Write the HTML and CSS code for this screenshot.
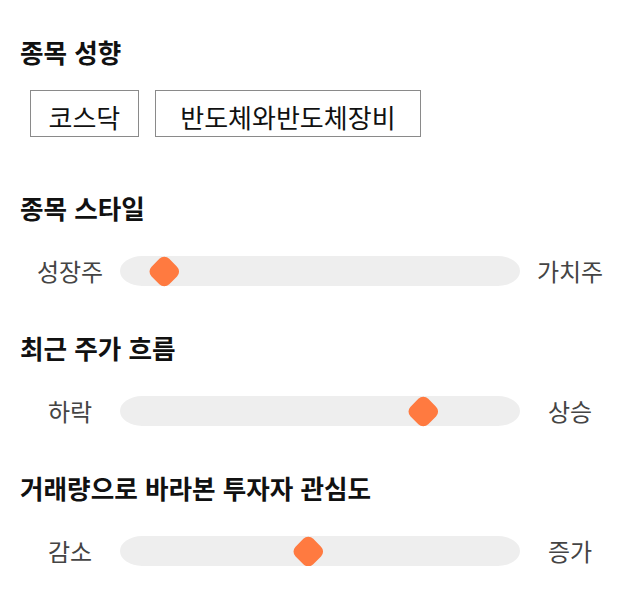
FILE: index.html
```html
<!DOCTYPE html>
<html lang="ko">
<head>
<meta charset="utf-8">
<link rel="stylesheet" href="styles.css">
</head>
<body>
<main class="page">
  <h2 class="title first">종목 성향</h2>
  <div class="chips">
    <span class="chip">코스닥</span>
    <span class="chip chip-wide">반도체와반도체장비</span>
  </div>

  <h2 class="title">종목 스타일</h2>
  <div class="scale">
    <span class="label">성장주</span>
    <div class="track">
      <span class="thumb" style="left: 30px"></span>
    </div>
    <span class="label">가치주</span>
  </div>

  <h2 class="title">최근 주가 흐름</h2>
  <div class="scale">
    <span class="label">하락</span>
    <div class="track">
      <span class="thumb" style="left: 289px"></span>
    </div>
    <span class="label">상승</span>
  </div>

  <h2 class="title">거래량으로 바라본 투자자 관심도</h2>
  <div class="scale">
    <span class="label">감소</span>
    <div class="track">
      <span class="thumb" style="left: 174px"></span>
    </div>
    <span class="label">증가</span>
  </div>
</main>
</body>
</html>
```

FILE: styles.css
```css
* { box-sizing: border-box; }
html, body { margin: 0; padding: 0; background: #ffffff; }
body {
  font-family: "Noto Sans CJK KR", "Noto Sans", sans-serif;
  color: #111111;
}
.page {
  width: 640px;
  padding: 0 20px;
  display: flex;
  flex-direction: column;
}
.title {
  margin: 46px 0 0 0;
  font-size: 25.6px;
  line-height: 32px;
  font-weight: 700;
  color: #111111;
}
.title.first { margin-top: 36px; }
.chips {
  display: flex;
  gap: 16px;
  margin: 22px 0 0 10px;
}
.chip {
  height: 47px;
  border: 1px solid #8a8a8a;
  padding: 11px 17.5px 4px;
  font-size: 26px;
  line-height: 30px;
  color: #111111;
}
.chip-wide {
  padding-left: 24.5px;
  padding-right: 24.5px;
}
.chips + .title { margin-top: 55px; }
.scale {
  display: flex;
  align-items: center;
  margin-top: 32px;
  height: 30px;
}
.label {
  width: 100px;
  text-align: center;
  font-size: 24px;
  color: #444444;
  line-height: 30px;
}
.track {
  position: relative;
  flex: 1;
  height: 30px;
  border-radius: 22px / 15px;
  background: #eeeeee;
}
.thumb {
  position: absolute;
  top: 2.7px;
  width: 24.6px;
  height: 24.6px;
  margin-left: 2.2px;
  border-radius: 7px;
  background: #ff7a40;
  transform: rotate(45deg);
}
```
